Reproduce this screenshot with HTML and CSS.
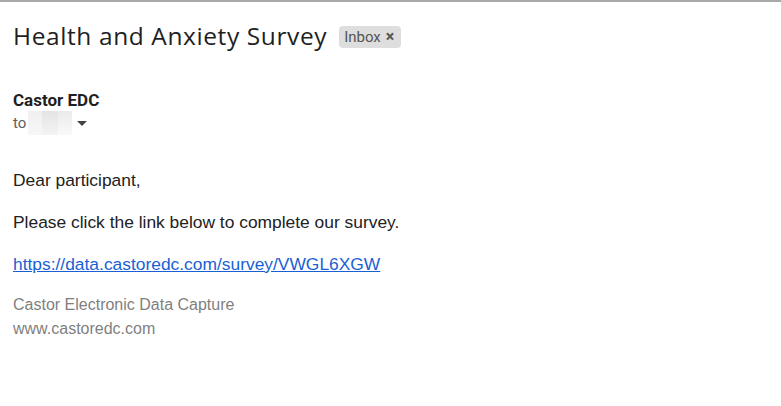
FILE: index.html
```html
<!DOCTYPE html>
<html>
<head>
<meta charset="utf-8">
<link rel="stylesheet" href="styles.css">
</head>
<body>
<div class="page">
  <div class="subject-row">
    <h1 class="subject">Health and Anxiety Survey</h1>
    <span class="chip">Inbox <span class="chip-x">×</span></span>
  </div>
  <div class="sender">
    <div class="sender-name">Castor EDC</div>
    <div class="recipient">
      <span class="to">to</span>
      <span class="blur"><span class="b1"></span><span class="b2"></span><span class="b3"></span></span>
      <svg class="caret" width="10" height="5" viewBox="0 0 10 5"><path d="M0 0h10L5 5z" fill="#444"/></svg>
    </div>
  </div>
  <div class="body">
    <p class="para">Dear participant,</p>
    <p class="para">Please click the link below to complete our survey.</p>
    <p class="para"><a class="link" href="#">https://data.castoredc.com/survey/VWGL6XGW</a></p>
    <div class="footer">
      <div>Castor Electronic Data Capture</div>
      <div>www.castoredc.com</div>
    </div>
  </div>
</div>
</body>
</html>
```
FILE: styles.css
```css
html, body {
  margin: 0;
  padding: 0;
  background: #fff;
}
.page {
  border-top: 2px solid #a9a9a9;
  padding: 0 13px;
  font-family: "Liberation Sans", Arial, sans-serif;
  color: #222;
}
.subject-row {
  display: flex;
  align-items: center;
  gap: 12px;
  margin-top: 19px;
  height: 32px;
}
.subject {
  margin: 0;
  font-family: "Open Sans", sans-serif;
  font-weight: 400;
  font-size: 24.5px;
  letter-spacing: 0.6px;
  color: #1f1f1f;
  line-height: 32px;
  position: relative;
  top: -1px;
}
.chip {
  display: inline-flex;
  align-items: center;
  gap: 5px;
  background: #dedede;
  border-radius: 4px;
  padding: 0 7px 0 5px;
  height: 22px;
  font-family: Roboto, sans-serif;
  font-size: 15px;
  color: #555;
  margin-top: -1px;
}
.chip-x {
  font-size: 16px;
  font-weight: 700;
  color: #555;
}
.sender {
  margin-top: 37px;
}
.sender-name {
  font-family: Roboto, sans-serif;
  font-weight: 700;
  font-size: 17px;
  color: #1f1f1f;
  line-height: 20px;
}
.recipient {
  display: flex;
  align-items: center;
  height: 26px;
  font-family: Roboto, sans-serif;
  font-size: 15px;
  color: #5e5e5e;
}
.blur {
  display: inline-flex;
  height: 24px;
  margin-left: 2px;
  width: 44px;
}
.blur span { display: block; height: 100%; }
.b1 { width: 14px; background: linear-gradient(#f0f0f0, #f7f7f7); }
.b2 { width: 16px; background: linear-gradient(#e4e4e4, #f4f4f4); }
.b3 { width: 14px; background: linear-gradient(#ebebeb, #f9f9f9); }
.caret {
  margin-left: 5px;
}
.body {
  margin-top: 34px;
  font-size: 17.4px;
  color: #222;
}
.para {
  margin: 0 0 22px;
  line-height: 20px;
}
.link {
  color: #1a5fd4;
  text-decoration: underline;
}
.footer {
  color: #7f7f7f;
  font-size: 16px;
  line-height: 24px;
  margin-top: -3px;
}
```
